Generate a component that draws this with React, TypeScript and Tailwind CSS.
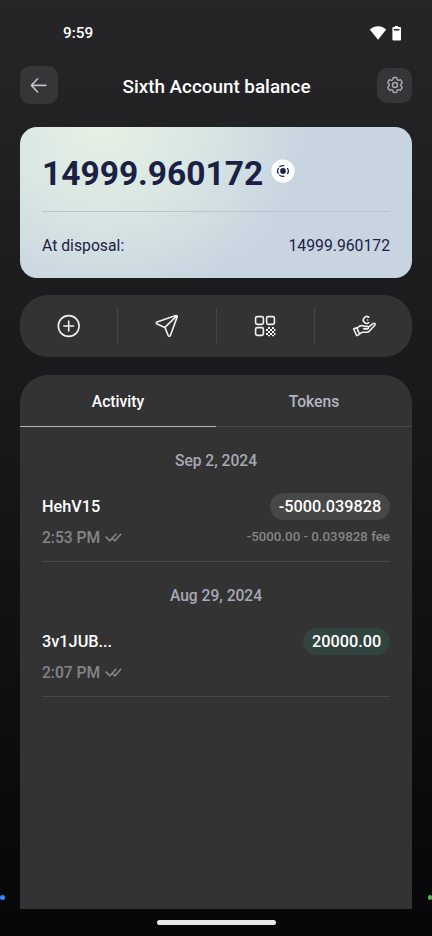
import type { ReactNode } from "react";

const BackIcon = () => (
  <svg width="18" height="18" viewBox="0 0 18 18" fill="none" stroke="#c0c1ca" strokeWidth="1.6" strokeLinecap="round" strokeLinejoin="round">
    <path d="M15.9 9.4H2M7.6 2.8L1.4 9.4L7.6 16" />
  </svg>
);

const GearIcon = () => (
  <svg width="20" height="20" viewBox="0 0 24 24" fill="none" stroke="#a9aab4" strokeWidth="1.7" strokeLinecap="round" strokeLinejoin="round">
    <path d="M9.594 3.94c.09-.542.56-.94 1.11-.94h2.593c.55 0 1.02.398 1.11.94l.213 1.281c.063.374.313.686.645.87.074.04.147.083.22.127.325.196.72.257 1.075.124l1.217-.456a1.125 1.125 0 0 1 1.37.49l1.296 2.247a1.125 1.125 0 0 1-.26 1.431l-1.003.827c-.293.241-.438.613-.43.992a7.723 7.723 0 0 1 0 .255c-.008.378.137.75.43.991l1.004.827c.424.35.534.955.26 1.43l-1.298 2.247a1.125 1.125 0 0 1-1.369.491l-1.217-.456c-.355-.133-.75-.072-1.076.124a6.47 6.47 0 0 1-.22.128c-.331.183-.581.495-.644.869l-.213 1.281c-.09.543-.56.94-1.11.94h-2.594c-.55 0-1.019-.398-1.11-.94l-.213-1.281c-.062-.374-.312-.686-.644-.87a6.52 6.52 0 0 1-.22-.127c-.325-.196-.72-.257-1.076-.124l-1.217.456a1.125 1.125 0 0 1-1.369-.49l-1.297-2.247a1.125 1.125 0 0 1 .26-1.431l1.004-.827c.292-.24.437-.613.43-.991a6.932 6.932 0 0 1 0-.255c.007-.38-.138-.751-.43-.992l-1.004-.827a1.125 1.125 0 0 1-.26-1.43l1.297-2.247a1.125 1.125 0 0 1 1.37-.491l1.216.456c.356.133.751.072 1.076-.124.072-.044.146-.086.22-.128.332-.183.582-.495.644-.869l.214-1.28Z" />
    <circle cx="12" cy="12" r="3" />
  </svg>
);

const TokenIcon = () => (
  <svg width="24" height="24" viewBox="0 0 24 24" fill="none" stroke="#1b2145" strokeWidth="1.2">
    <circle cx="12" cy="12" r="11.6" fill="#fff" stroke="none" />
    <circle cx="12" cy="12" r="2.9" fill="#1b2145" stroke="none" />
    <path d="M13.2 6.8A5.4 5.4 0 0 0 8.2 8.1M7.5 9A5.4 5.4 0 0 0 7.5 15M8.2 15.9A5.4 5.4 0 0 0 13.2 17.2M16.4 9A5.4 5.4 0 0 1 16.4 15" />
  </svg>
);

const PlusIcon = () => (
  <svg width="24" height="24" viewBox="0 0 24 24" fill="none" stroke="#f0f0f0" strokeWidth="1.6" strokeLinecap="round">
    <circle cx="11.7" cy="12" r="10.4" />
    <path d="M11.7 7.1V16.9M6.8 12H16.6" />
  </svg>
);

const SendIcon = () => (
  <svg width="24" height="24" viewBox="0 0 24 24" fill="none" stroke="#f0f0f0" strokeWidth="1.6" strokeLinecap="round" strokeLinejoin="round">
    <path d="M20.9 1.6L2 7.9C1 8.3 1 9.6 2 10L9.9 13.4L13.2 21.5C13.7 22.6 15 22.5 15.4 21.4L22.2 2.9C22.5 2 21.8 1.3 20.9 1.6ZM9.9 13.4L21.8 1.9" />
  </svg>
);

const QrIcon = () => (
  <svg width="22" height="22" viewBox="0 0 22 22" fill="none" stroke="#f0f0f0" strokeWidth="1.6">
    <rect x="1.6" y="1.6" width="7.8" height="7.8" rx="1.6" />
    <rect x="12.6" y="1.6" width="7.8" height="7.8" rx="1.6" />
    <rect x="1.6" y="12.6" width="7.8" height="7.8" rx="1.6" />
    <path stroke="none" fill="#f0f0f0" d="M14 12h2v2h-2zM18 12h2v2h-2zM12 14h2v2h-2zM16 14h2v2h-2zM20 14h1.4v2H20zM14 16h2v2h-2zM18 16h2v2h-2zM12 18h2v2h-2zM16 18h2v2h-2zM20 18h1.4v2H20zM14 20h2v1.3h-2zM18 20h2v1.3h-2z" />
  </svg>
);

const EarnIcon = () => (
  <svg className="ml-[2px]" width="25" height="24" viewBox="0 0 26 24" fill="none" stroke="#f0f0f0" strokeWidth="1.65" strokeLinecap="round" strokeLinejoin="round">
    <path d="M17.4 2.9A3.5 3.5 0 1 0 17.4 8.5" />
    <circle cx="16.2" cy="5.8" r="0.8" fill="#f0f0f0" stroke="none" />
    <path d="M1.7 14.9L4.9 13.7L8 20.7L4.9 22ZM5.4 14.4C7.1 12.1 9 11.2 11.2 11.8L13.3 12.4H15.9C17.7 12.4 17.6 14.9 15.9 15H12.2M17.1 13.2L21.8 9.5C23.5 8.5 24.8 9.8 23.7 11.3L18.2 17.2C17.4 18.1 16.2 18.5 15 18.5H10.8L8 19.9" />
  </svg>
);

const DoubleCheck = () => (
  <svg width="17" height="10" viewBox="0 0 17 10" fill="none" stroke="#858585" strokeWidth="1.6">
    <path d="M0.6 3.6L4.9 7.8L11.3 0.8M6.9 5L9.9 7.8L16.2 0.8" />
  </svg>
);

function Transaction({ date, name, time, amount, badge, detail }: { date: string; name: string; time: string; amount: string; badge: string; detail?: string }) {
  return (
    <section className="h-[135px]">
      <h2 className="h-[64px] pt-[22px] text-center text-[15.6px] leading-[24px] font-medium text-[#a8a8b5]">{date}</h2>
      <div className="mx-[22px] flex h-[71px] justify-between border-b border-[#484848]">
        <div className="flex flex-col">
          <span className="mt-[4px] text-[16.3px] leading-[24px] font-medium text-white">{name}</span>
          <span className="mt-[7px] flex items-center gap-[5px] text-[15.6px] leading-[24px] font-medium text-[#858585]">
            {time}
            <DoubleCheck />
          </span>
        </div>
        <div className="flex flex-col items-end">
          <span className={`mt-[2px] h-[27px] rounded-full px-[8.7px] text-[16.3px] leading-[28px] font-medium text-white ${badge}`}>{amount}</span>
          {detail && <span className="mt-[6px] text-[13.3px] leading-[21px] font-medium text-[#858585]">{detail}</span>}
        </div>
      </div>
    </section>
  );
}

const Action = ({ children }: { children: ReactNode }) => (
  <div className="flex h-[36px] flex-1 items-center justify-center border-r border-[#454545] last:border-r-0">{children}</div>
);

export default function App() {
  return (
    <div className="relative flex h-[936px] w-[432px] flex-col overflow-hidden bg-linear-to-b from-[#262628] via-[#17171a] to-[#070709] font-[Roboto,sans-serif]">
      <div className="flex h-[66px] shrink-0 justify-between pt-[22px] pr-[29px] pl-[63px]">
        <span className="text-[15.3px] leading-[23px] font-medium text-white">9:59</span>
        <svg width="34" height="22" viewBox="0 0 34 22" fill="#fff">
          <path d="M0.8 7.6C5.5 3 12.6 3 17.2 7.6L9 17.8Z" />
          <path fillRule="evenodd" d="M25.7 4H29.1V5.1H31Q32 5.1 32 6.1V17.3Q32 18.5 31 18.5H24.4Q23.4 18.5 23.4 17.3V6.1Q23.4 5.1 24.4 5.1H25.7ZM25 7V8.6H30.4V7Z" />
        </svg>
      </div>
      <header className="flex h-[61px] shrink-0 items-start justify-between px-5">
        <button className="flex size-[38px] items-center justify-center rounded-[10px] bg-[#363638]"><BackIcon /></button>
        <h1 className="mt-[9px] text-[18.85px] leading-[24px] font-medium text-white">Sixth Account balance</h1>
        <button className="mt-[2px] ml-[2px] flex size-[35px] items-center justify-center rounded-[10px] bg-[#363638] pb-px pl-px"><GearIcon /></button>
      </header>

      <main className="mx-5 flex h-[782px] shrink-0 flex-col">
        <section className="h-[151px] shrink-0 rounded-[17px] bg-[#c8d5e1] bg-[radial-gradient(ellipse_205px_175px_at_82px_0px,#e5f1e3_0%,#dae7e3_45%,#c8d5e1_100%)] px-[22px] pt-[22px] text-[#1b2145]">
          <div className="flex h-[63px] items-start gap-[8px] border-b border-[#b8c5cf]">
            <span className="pt-px text-[33.5px] leading-[48px] font-bold">14999.960172</span>
            <span className="mt-[10px]"><TokenIcon /></span>
          </div>
          <div className="mt-[22px] flex justify-between text-[15.75px] leading-[24px]">
            <span>At disposal:</span>
            <span>14999.960172</span>
          </div>
        </section>

        <nav className="mt-[17px] flex h-[62px] shrink-0 items-center rounded-[28px] bg-[#333333]">
          <Action><PlusIcon /></Action>
          <Action><SendIcon /></Action>
          <Action><QrIcon /></Action>
          <Action><EarnIcon /></Action>
        </nav>

        <section className="mt-[18px] h-[534px] shrink-0 overflow-hidden rounded-t-[28px] bg-[#333333]">
          <div className="grid h-[52px] grid-cols-2 text-center text-[15.7px] leading-[51px] font-medium">
            <span className="h-[52px] border-b border-[#b4b8b8] pt-px text-white">Activity</span>
            <span className="h-[52px] border-b border-[#484848] pt-px text-[#b4b4c0]">Tokens</span>
          </div>
          <Transaction date="Sep 2, 2024" name="HehV15" time="2:53 PM" amount="-5000.039828" badge="bg-[#474747]" detail="-5000.00 - 0.039828 fee" />
          <Transaction date="Aug 29, 2024" name="3v1JUB..." time="2:07 PM" amount="20000.00" badge="bg-[#31443f]" />
        </section>
      </main>
      <div className="mx-auto mt-[11px] h-[5px] w-[119px] shrink-0 rounded-full bg-[#e8e8e8]" />
      <span className="absolute top-[895px] left-0 size-[4.5px] rounded-full bg-[#4285f4]" />
      <span className="absolute top-[895px] right-0 size-[4.5px] rounded-full bg-[#55b653]" />
    </div>
  );
}
